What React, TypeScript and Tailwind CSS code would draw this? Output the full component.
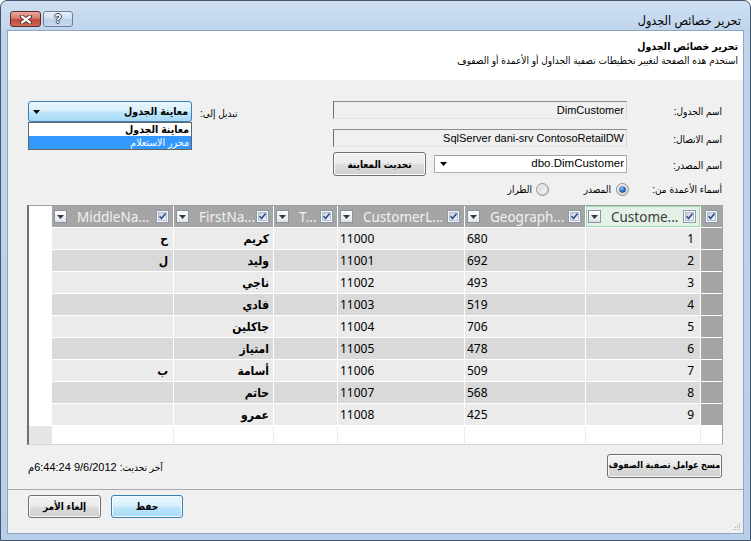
import React from 'react';

const rows: string[][] = [
  ['1', '680', '11000', '', 'كريم', 'ح'],
  ['2', '692', '11001', '', 'وليد', 'ل'],
  ['3', '493', '11002', '', 'ناجي', ''],
  ['4', '519', '11003', '', 'فادي', ''],
  ['5', '706', '11004', '', 'جاكلين', ''],
  ['6', '478', '11005', '', 'امتياز', ''],
  ['7', '509', '11006', '', 'أسامة', 'ب'],
  ['8', '568', '11007', '', 'حاتم', ''],
  ['9', '425', '11008', '', 'عمرو', ''],
];

function CheckBox() {
  return (
    <svg width="13" height="13" viewBox="0 0 13 13" className="shrink-0">
      <defs>
        <linearGradient id="cbg" x1="0" y1="0" x2="1" y2="1">
          <stop offset="0" stopColor="#c3cedd" />
          <stop offset="1" stopColor="#f2f5f9" />
        </linearGradient>
      </defs>
      <rect x="0.5" y="0.5" width="12" height="12" fill="#f6f7f9" stroke="#8e9aab" />
      <rect x="2.5" y="2.5" width="8" height="8" fill="url(#cbg)" stroke="#b3bfcf" />
      <path d="M3.6 6.3 L5.6 8.6 L9.6 3.6" fill="none" stroke="#34508f" strokeWidth="1.6" />
    </svg>
  );
}

function HeadDrop() {
  return (
    <div className="w-[13px] h-[13px] shrink-0 border border-[#8893a3] bg-[linear-gradient(to_bottom,#ffffff,#dde2e9)] flex items-center justify-center">
      <svg width="7" height="4" viewBox="0 0 7 4">
        <path d="M0 0 H7 L3.5 4 Z" fill="#3a3a3a" />
      </svg>
    </div>
  );
}

function HeadCell({ w, label, green }: { w: string; label: string; green?: boolean }) {
  return (
    <div
      className={
        w +
        ' shrink-0 border-r border-white flex items-center pl-[2px] pr-[4px] ' +
        (green
          ? 'bg-[#e3f1e7] shadow-[inset_0_0_0_1px_#9cd7ae] text-[#3c3c3c]'
          : 'bg-[#a5a5a5] text-[#f1f1f1]')
      }
    >
      <HeadDrop />
      <div className="flex-1 ml-[10px] whitespace-nowrap overflow-hidden text-left text-[13.5px] leading-[20px]">{label}</div>
      <CheckBox />
    </div>
  );
}

function Radio({ checked }: { checked?: boolean }) {
  return (
    <svg width="13" height="13" viewBox="0 0 13 13" className="shrink-0">
      <defs>
        <linearGradient id={checked ? 'rg1' : 'rg2'} x1="0" y1="0" x2="1" y2="1">
          <stop offset="0" stopColor="#f2f2f2" />
          <stop offset="1" stopColor="#d4d4d4" />
        </linearGradient>
        <radialGradient id="rdot" cx="0.4" cy="0.35" r="0.7">
          <stop offset="0" stopColor="#8cc8f5" />
          <stop offset="0.6" stopColor="#2a6fc0" />
          <stop offset="1" stopColor="#113f85" />
        </radialGradient>
        <linearGradient id="rin" x1="0" y1="0" x2="1" y2="1">
          <stop offset="0" stopColor="#d2d2d2" />
          <stop offset="1" stopColor="#fbfbfb" />
        </linearGradient>
      </defs>
      <circle cx="6.5" cy="6.5" r="6" fill={checked ? 'url(#rg1)' : 'url(#rg2)'} stroke="#8e8f8f" />
      {checked ? (
        <circle cx="6.5" cy="6.5" r="3.3" fill="url(#rdot)" />
      ) : (
        <circle cx="6.5" cy="6.5" r="3.6" fill="url(#rin)" />
      )}
    </svg>
  );
}

const btnBase =
  'border border-[#707070] rounded-[3px] bg-[linear-gradient(to_bottom,#f2f2f2_0%,#ebebeb_48%,#dddddd_52%,#cfcfcf_100%)] shadow-[inset_0_0_0_1px_#fbfbfb] flex items-center justify-center font-bold whitespace-nowrap';

const tb =
  'w-[294px] h-[18px] border border-[#a6a6a6] border-t-[#8c8c8c] border-r-[#d8d8d8] border-b-[#e3e3e3] border-l-[#6e6e6e] bg-[#f0f0f0] flex items-center pr-[2px] text-[11px]';

export default function App() {
  return (
    <div className="w-[751px] h-[541px] flex flex-col border border-[#44556b] rounded-t-[7px] bg-[linear-gradient(to_bottom,#d0e0f2_0px,#bfd4ec_30px,#b9cfe9_100%)] font-['Liberation_Sans','DejaVu_Sans_Condensed','DejaVu_Sans',sans-serif] text-[10px] text-black overflow-hidden">
      {/* Title bar */}
      <div className="h-[29px] shrink-0 flex items-start justify-between pl-[9px] pr-[9px] pt-[10px]">
        <div className="flex gap-[2px]">
          <div className="w-[31px] h-[16px] rounded-[3px] border border-[#5e2b25] bg-[linear-gradient(to_bottom,#e9a99e_0%,#d57a6c_45%,#c1473a_55%,#cf6a55_100%)] flex items-center justify-center">
            <svg width="12" height="9" viewBox="0 0 12 9">
              <path d="M2 1.5 L10 7.5 M10 1.5 L2 7.5" stroke="#4a2420" strokeWidth="4" strokeLinecap="round" />
              <path d="M2 1.5 L10 7.5 M10 1.5 L2 7.5" stroke="#ffffff" strokeWidth="2.2" strokeLinecap="round" />
            </svg>
          </div>
          <div className="w-[30px] h-[16px] rounded-[3px] border border-[#6b7f99] bg-[linear-gradient(to_bottom,#e6eef8_0%,#d3e1f1_45%,#bccfe7_55%,#c9daee_100%)] flex items-center justify-center">
            <span className="text-white font-bold text-[12px] leading-[12px] [text-shadow:1px_0_0_#33425a,-1px_0_0_#33425a,0_1px_0_#33425a,0_-1px_0_#33425a]">?</span>
          </div>
        </div>
        <div dir="rtl" className="text-[12.5px] leading-[16px] mt-[2px] text-black">تحرير خصائص الجدول</div>
      </div>

      {/* Client */}
      <div dir="rtl" className="flex-1 mx-[6px] mb-[6px] border border-[#8fa6c0] flex flex-col relative">
        {/* Header */}
        <div className="h-[49px] shrink-0 bg-white pt-[7px] pr-[5px]">
          <div className="font-bold text-[10.5px] leading-[16px]">تحرير خصائص الجدول</div>
          <div className="text-[10px] leading-[14px]">استخدم هذه الصفحة لتغيير تخطيطات تصفية الجداول أو الأعمدة أو الصفوف</div>
        </div>

        {/* Body */}
        <div className="flex-1 bg-[#f0f0f0] flex flex-col pl-[20px] pr-[21px]">
          {/* Form */}
          <div className="pt-[21px] flex justify-between items-start">
            {/* Right panel */}
            <div className="flex flex-col">
              <div className="flex h-[18px] items-center">
                <div className="w-[95px] text-right pt-[3px]">اسم الجدول:</div>
                <div className={tb}>DimCustomer</div>
              </div>
              <div className="flex h-[18px] items-center mt-[10px]">
                <div className="w-[95px] text-right pt-[3px]">اسم الاتصال:</div>
                <div className={tb}>
                  <span dir="ltr">SqlServer dani-srv ContosoRetailDW</span>
                </div>
              </div>
              <div className="flex h-[24px] items-center mt-[5px]">
                <div className="w-[95px] text-right pt-[3px]">اسم المصدر:</div>
                <div className="w-[193px] h-[18px] border border-[#abadb3] border-t-[#9a9ca3] bg-white flex items-center justify-between pr-[2px] pl-[5px] text-[11.5px]">
                  <span dir="ltr">dbo.DimCustomer</span>
                  <svg width="7" height="4" viewBox="0 0 7 4">
                    <path d="M0 0 H7 L3.5 4 Z" fill="#000" />
                  </svg>
                </div>
                <div className={'w-[93px] h-[24px] mr-[8px] text-[10px] ' + btnBase}>تحديث المعاينة</div>
              </div>
              <div className="flex h-[14px] items-center mt-[6px]">
                <div className="w-[93px] text-right">أسماء الأعمدة من:</div>
                <div className="w-[80px] flex items-center gap-[5px]">
                  <Radio checked />
                  <span>المصدر</span>
                </div>
                <div className="flex items-center gap-[4px]">
                  <Radio />
                  <span>الطراز</span>
                </div>
              </div>
            </div>

            {/* Left panel */}
            <div className="flex items-start">
              <div className="pt-[5px] ml-[8px]">تبديل إلى:</div>
              <div className="relative w-[164px]">
                <div className="h-[21px] rounded-[3px] border border-[#3c7fb1] bg-[linear-gradient(to_bottom,#eaf6fd_0%,#d9f0fc_48%,#bee6fd_52%,#a7d9f5_100%)] flex items-center justify-between pr-[3px] pl-[4px]">
                  <span className="text-[10.5px] font-bold">معاينة الجدول</span>
                  <svg width="7" height="4" viewBox="0 0 7 4">
                    <path d="M0 0 H7 L3.5 4 Z" fill="#000" />
                  </svg>
                </div>
                <div className="absolute top-[21px] left-0 w-[164px] border border-[#646464] bg-white z-10">
                  <div className="h-[13px] leading-[13px] text-right pr-[2px] text-[10.5px] font-bold">معاينة الجدول</div>
                  <div className="h-[13px] leading-[13px] text-right pr-[2px] text-[10.5px] bg-[#3399ff] text-white">محرر الاستعلام</div>
                </div>
              </div>
            </div>
          </div>

          {/* Grid */}
          <div
            dir="ltr"
            className="mt-[9px] -mx-px h-[240px] shrink-0 flex flex-col border-l-2 border-l-[#6f6f6f] border-t border-t-[#a0a0a0] border-r border-r-[#a0a0a0] border-b border-b-[#d4d4d4] bg-white font-['Noto_Sans','DejaVu_Sans_Condensed','DejaVu_Sans',sans-serif] overflow-hidden"
          >
            <div className="flex h-[22px] shrink-0 border-b border-white">
              <div className="w-[23px] shrink-0 bg-white" />
              <HeadCell w="w-[122px]" label="MiddleNa..." />
              <HeadCell w="w-[100px]" label="FirstNa..." />
              <HeadCell w="w-[64px]" label="T..." />
              <HeadCell w="w-[127px]" label="CustomerL..." />
              <HeadCell w="w-[121px]" label="Geograph..." />
              <HeadCell w="w-[115px]" label="Custome..." green />
              <div className="w-[21px] shrink-0 bg-[#a5a5a5] flex items-center justify-center">
                <CheckBox />
              </div>
            </div>
            {rows.map((r, i) => {
              const bg = i % 2 === 0 ? 'bg-[#ebebeb]' : 'bg-[#d9d9d9]';
              return (
                <div key={i} className="flex h-[22px] shrink-0 border-b border-white text-[12px] leading-[21px] text-black">
                  <div className="w-[23px] shrink-0 bg-white" />
                  <div className={'w-[122px] shrink-0 border-r border-white text-right pr-[5px] font-bold ' + bg}>{r[5]}</div>
                  <div className={'w-[100px] shrink-0 border-r border-white text-right pr-[4px] font-bold ' + bg}>{r[4]}</div>
                  <div className={'w-[64px] shrink-0 border-r border-white ' + bg}>{r[3]}</div>
                  <div className={'w-[127px] shrink-0 border-r border-white text-left pl-[2px] ' + bg}>{r[2]}</div>
                  <div className={'w-[121px] shrink-0 border-r border-white text-left pl-[2px] ' + bg}>{r[1]}</div>
                  <div className={'w-[115px] shrink-0 border-r border-white text-right pr-[6px] ' + bg}>{r[0]}</div>
                  <div className="w-[21px] shrink-0 bg-[#a5a5a5]" />
                </div>
              );
            })}
            <div className="flex h-[18px] shrink-0">
              <div className="w-[23px] shrink-0 bg-[#e6e6e6]" />
              <div className="w-[122px] shrink-0 border-r border-[#ececec]" />
              <div className="w-[100px] shrink-0 border-r border-[#ececec]" />
              <div className="w-[64px] shrink-0 border-r border-[#ececec]" />
              <div className="w-[127px] shrink-0 border-r border-[#ececec]" />
              <div className="w-[121px] shrink-0 border-r border-[#ececec]" />
              <div className="w-[115px] shrink-0 border-r border-[#ececec]" />
              <div className="w-[21px] shrink-0" />
            </div>
          </div>

          {/* Bottom row */}
          <div className="mt-[9px] h-[24px] shrink-0 flex justify-between items-center">
            <div className={'w-[115px] h-[24px] text-[9px] ' + btnBase}>مسح عوامل تصفية الصفوف</div>
            <div className="pt-[2px] text-[11px]">
              <span className="text-[10px]">آخر تحديث:</span> 9/6/2012 6:44:24م
            </div>
          </div>

          {/* Separator */}
          <div className="mt-[11px] -ml-[20px] -mr-[21px] h-px shrink-0 bg-[#a9a9a9]" />

          {/* Buttons */}
          <div className="mt-[5px] h-[23px] shrink-0 flex justify-end gap-[10px]">
            <div className="w-[72px] h-[23px] rounded-[3px] border border-[#3c7fb1] bg-[linear-gradient(to_bottom,#eaf6fd_0%,#d9f0fc_48%,#bee6fd_52%,#a7d9f5_100%)] shadow-[inset_0_0_0_1px_#f4fbff] flex items-center justify-center text-[10px] font-bold">
              حفظ
            </div>
            <div className={'w-[73px] h-[23px] text-[10px] ' + btnBase}>إلغاء الأمر</div>
          </div>
        </div>

        {/* Resize grip */}
        <svg width="9" height="9" viewBox="0 0 9 9" className="absolute right-[2px] bottom-[2px]">
          <g fill="#b0b0b0">
            <rect x="7" y="1" width="1" height="1" />
            <rect x="5" y="3" width="1" height="1" />
            <rect x="7" y="3" width="1" height="1" />
            <rect x="3" y="5" width="1" height="1" />
            <rect x="5" y="5" width="1" height="1" />
            <rect x="7" y="5" width="1" height="1" />
            <rect x="1" y="7" width="1" height="1" />
            <rect x="3" y="7" width="1" height="1" />
            <rect x="5" y="7" width="1" height="1" />
            <rect x="7" y="7" width="1" height="1" />
          </g>
        </svg>
      </div>
    </div>
  );
}
